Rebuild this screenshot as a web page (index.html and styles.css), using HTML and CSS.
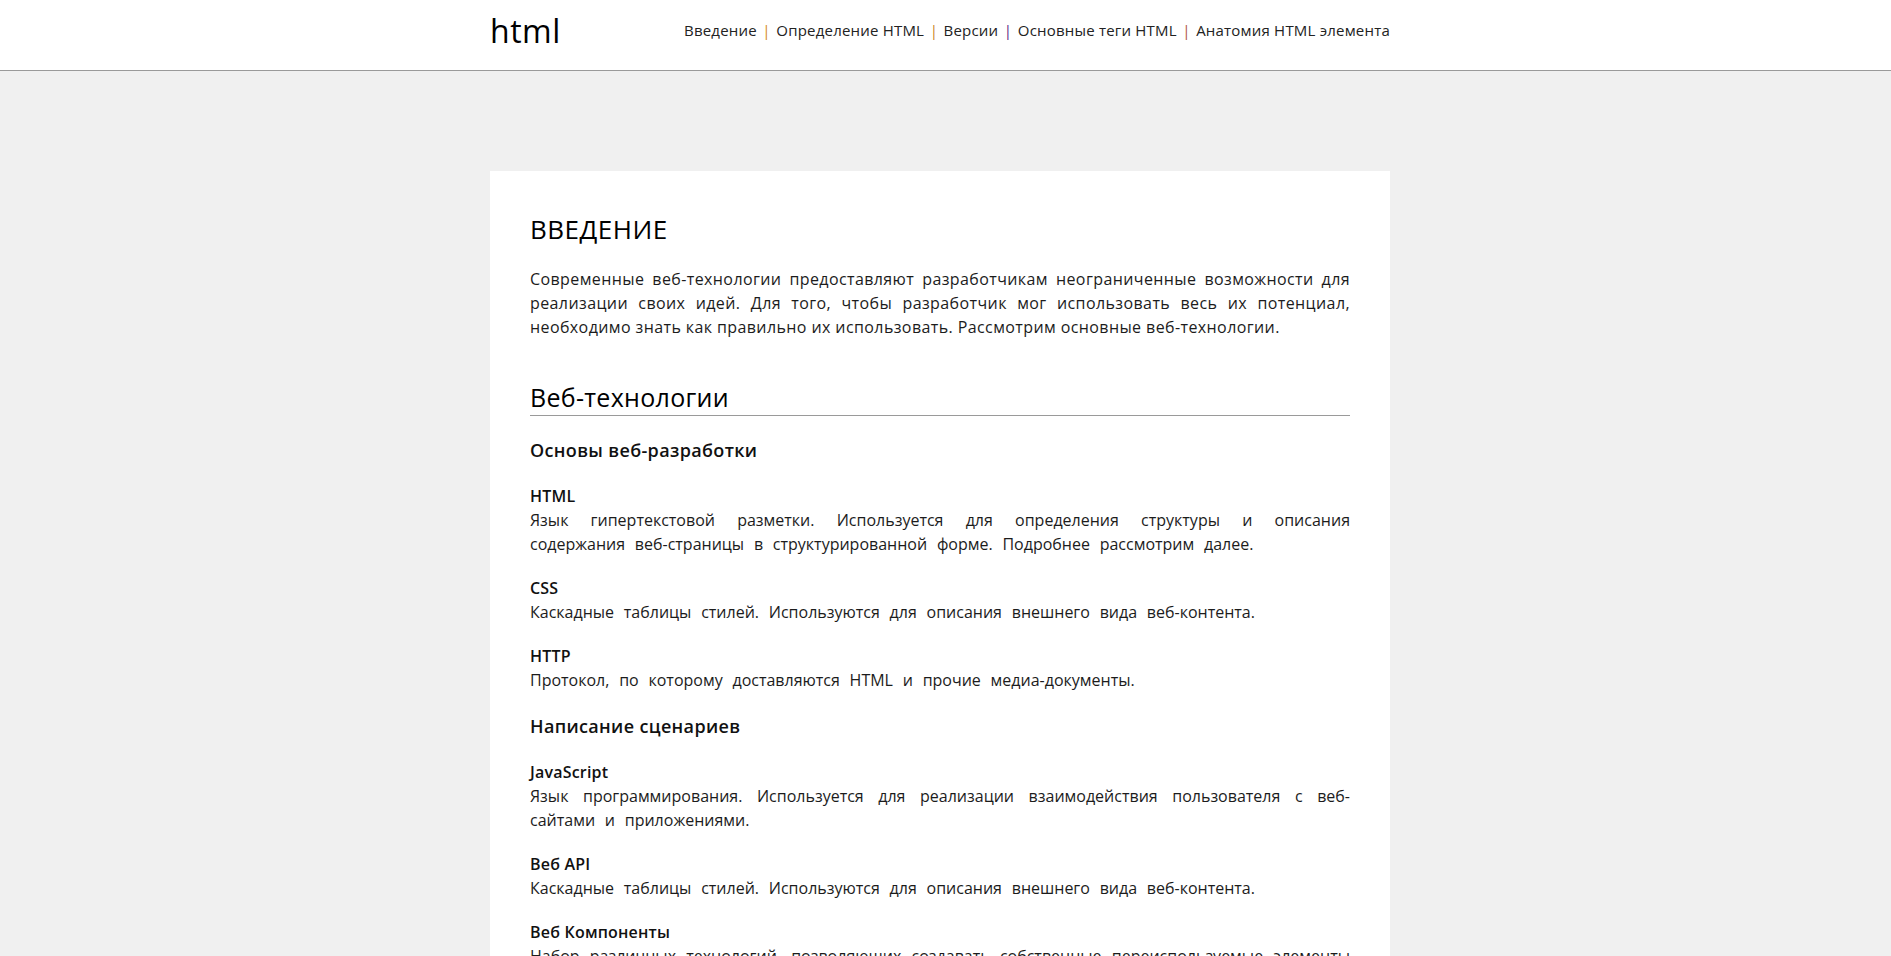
FILE: index.html
```html
<!DOCTYPE html>
<html lang="ru">
<head>
<meta charset="utf-8">
<title>html</title>
<link rel="stylesheet" href="styles.css">
</head>
<body>
<header class="site-header">
  <div class="header-inner">
    <div class="logo">html</div>
    <nav class="nav">
      <a href="#">Введение</a><span class="sep sep-1">|</span><a href="#">Определение HTML</a><span class="sep sep-2">|</span><a href="#">Версии</a><span class="sep sep-3">|</span><a href="#">Основные теги HTML</a><span class="sep sep-4">|</span><a href="#">Анатомия HTML элемента</a>
    </nav>
  </div>
</header>
<main class="main">
  <article class="card">
    <h1 class="title">ВВЕДЕНИЕ</h1>
    <p class="intro">Современные веб-технологии предоставляют разработчикам неограниченные возможности для реализации своих идей. Для того, чтобы разработчик мог использовать весь их потенциал, необходимо знать как правильно их использовать. Рассмотрим основные веб-технологии.</p>

    <h2 class="section-title">Веб-технологии</h2>

    <h3 class="group-title">Основы веб-разработки</h3>
    <dl class="terms">
      <div class="term">
        <dt>HTML</dt>
        <dd>Язык гипертекстовой разметки. Используется для определения структуры и описания содержания веб-страницы в структурированной форме. Подробнее рассмотрим далее.</dd>
      </div>
      <div class="term">
        <dt>CSS</dt>
        <dd>Каскадные таблицы стилей. Используются для описания внешнего вида веб-контента.</dd>
      </div>
      <div class="term">
        <dt>HTTP</dt>
        <dd>Протокол, по которому доставляются HTML и прочие медиа-документы.</dd>
      </div>
    </dl>

    <h3 class="group-title">Написание сценариев</h3>
    <dl class="terms">
      <div class="term">
        <dt>JavaScript</dt>
        <dd>Язык программирования. Используется для реализации взаимодействия пользователя с веб-сайтами и приложениями.</dd>
      </div>
      <div class="term">
        <dt>Веб API</dt>
        <dd>Каскадные таблицы стилей. Используются для описания внешнего вида веб-контента.</dd>
      </div>
      <div class="term">
        <dt>Веб Компоненты</dt>
        <dd>Набор различных технологий, позволяющих создавать собственные переиспользуемые элементы с инкапсулированной функциональностью и использовать их в веб-приложениях.</dd>
      </div>
    </dl>
  </article>
</main>
</body>
</html>
```
FILE: styles.css
```css
* { box-sizing: border-box; }

html, body {
  margin: 0;
  padding: 0;
}

body {
  background: #f0f0f0;
  color: #1c1c1c;
  font-family: "Open Sans", "Liberation Sans", sans-serif;
  font-size: 16px;
}

.site-header {
  background: #ffffff;
  border-bottom: 1px solid #9a9a9a;
  height: 71px;
  padding-right: 11px;
}

.header-inner {
  width: 900px;
  margin: 0 auto;
  display: flex;
  align-items: center;
  justify-content: space-between;
  height: 70px;
}

.logo {
  font-size: 32px;
  font-weight: 500;
  color: #000;
  letter-spacing: 0.5px;
  margin-top: -10px;
}

.nav {
  font-size: 15px;
  letter-spacing: 0.2px;
  margin-top: -10px;
  white-space: nowrap;
}

.nav a {
  color: #222;
  text-decoration: none;
}

.sep {
  margin: 0 5.5px;
}
.sep-1 { color: #d48a16; }
.sep-2 { color: #c98218; }
.sep-3 { color: #5e1a86; }
.sep-4 { color: #b0503c; }

.main {
  padding: 100px 11px 40px 0;
}

.card {
  width: 900px;
  margin: 0 auto;
  background: #ffffff;
  padding: 38px 40px 40px;
}

.title {
  font-size: 26px;
  font-weight: 500;
  letter-spacing: 0.5px;
  color: #000;
  margin: 0 0 18px;
  line-height: 40px;
}

.intro {
  margin: 0;
  line-height: 24px;
  letter-spacing: 0.4px;
  text-align: justify;
}

.section-title {
  font-size: 25px;
  font-weight: 500;
  letter-spacing: 0.3px;
  color: #000;
  margin: 41px 0 0;
  line-height: 34px;
  padding-bottom: 1px;
  border-bottom: 1px solid #9a9a9a;
}

.group-title {
  font-size: 18px;
  font-weight: 600;
  letter-spacing: 0.35px;
  color: #111;
  margin: 20px 0 0;
  line-height: 28px;
}

.terms {
  margin: 0;
}

.term {
  margin-top: 20px;
}

.term dt {
  font-weight: 600;
  letter-spacing: 0.2px;
  color: #111;
  line-height: 24px;
}

.term dd {
  margin: 0;
  line-height: 24px;
  letter-spacing: 0;
  word-spacing: 5.6px;
  text-align: justify;
}

.terms + .group-title {
  margin-top: 20px;
}
```
